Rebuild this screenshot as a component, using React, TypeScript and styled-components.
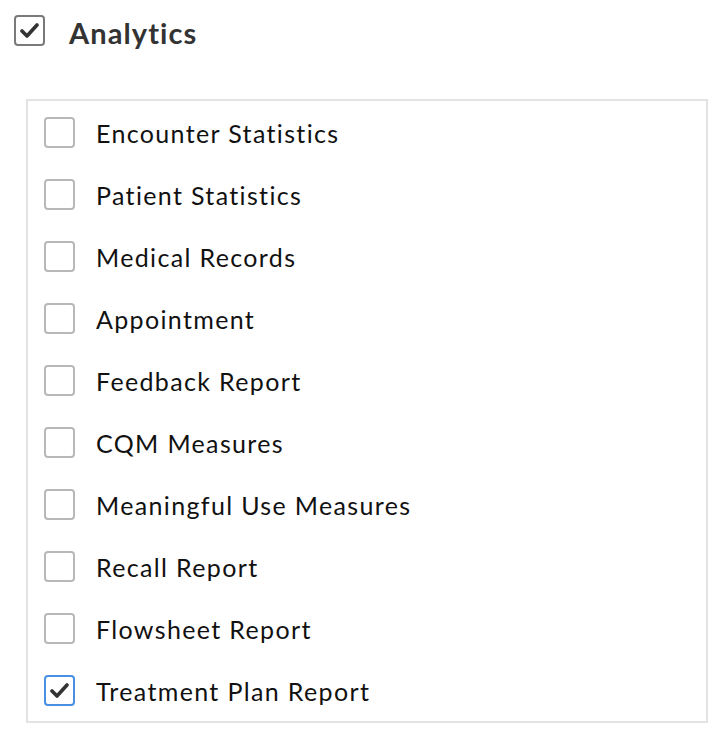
import React, { useState } from 'react';
import styled, { createGlobalStyle } from 'styled-components';

const GlobalStyle = createGlobalStyle`
  html, body {
    margin: 0;
    padding: 0;
    background: #ffffff;
    font-family: Lato, "Open Sans", sans-serif;
  }
`;

const Page = styled.div`
  padding: 15px 19px 0 14px;
  width: 727px;
  box-sizing: border-box;
`;

const Header = styled.label`
  display: flex;
  align-items: center;
  gap: 24px;
  height: 31px;
  cursor: pointer;
`;

const Title = styled.span`
  font-size: 29px;
  font-weight: 700;
  color: #333333;
  letter-spacing: 1.1px;
  position: relative;
  top: 2px;
`;

const Box = styled.span<{ $focused?: boolean; $dark?: boolean }>`
  flex: none;
  width: 31px;
  height: 31px;
  box-sizing: border-box;
  border: 2px solid ${({ $focused, $dark }) => ($focused ? '#4a90e2' : $dark ? '#7a7a7a' : '#b8b8b8')};
  border-radius: 4px;
  background: #fff;
  display: flex;
  align-items: center;
  justify-content: center;
`;

const Panel = styled.div`
  margin: 53px 0 0 12px;
  border: 2px solid #e3e3e3;
  display: flex;
  flex-direction: column;
  padding-left: 16px;
`;

const Row = styled.label`
  display: flex;
  align-items: center;
  gap: 21px;
  height: 62px;
  cursor: pointer;
`;

const Label = styled.span`
  font-size: 25px;
  color: #111111;
  letter-spacing: 1.35px;
  position: relative;
  top: 1px;
`;

const Check = () => (
  <svg width="19" height="15" viewBox="0 0 19 15">
    <polyline
      points="2,8 7,13 17,2"
      fill="none"
      stroke="#333"
      strokeWidth="3.6"
      strokeLinecap="round"
      strokeLinejoin="round"
    />
  </svg>
);

const items = [
  'Encounter Statistics',
  'Patient Statistics',
  'Medical Records',
  'Appointment',
  'Feedback Report',
  'CQM Measures',
  'Meaningful Use Measures',
  'Recall Report',
  'Flowsheet Report',
  'Treatment Plan Report',
];

const App = () => {
  const [checked, setChecked] = useState<boolean[]>(items.map((_, i) => i === items.length - 1));
  const toggle = (i: number) =>
    setChecked((prev) => prev.map((v, j) => (j === i ? !v : v)));

  return (
    <>
      <GlobalStyle />
      <Page>
        <Header>
          <Box $dark>
            <Check />
          </Box>
          <Title>Analytics</Title>
        </Header>
        <Panel>
          {items.map((item, i) => (
            <Row key={item} onClick={() => toggle(i)}>
              <Box $focused={i === items.length - 1}>
                {checked[i] && <Check />}
              </Box>
              <Label>{item}</Label>
            </Row>
          ))}
        </Panel>
      </Page>
    </>
  );
};

export default App;
